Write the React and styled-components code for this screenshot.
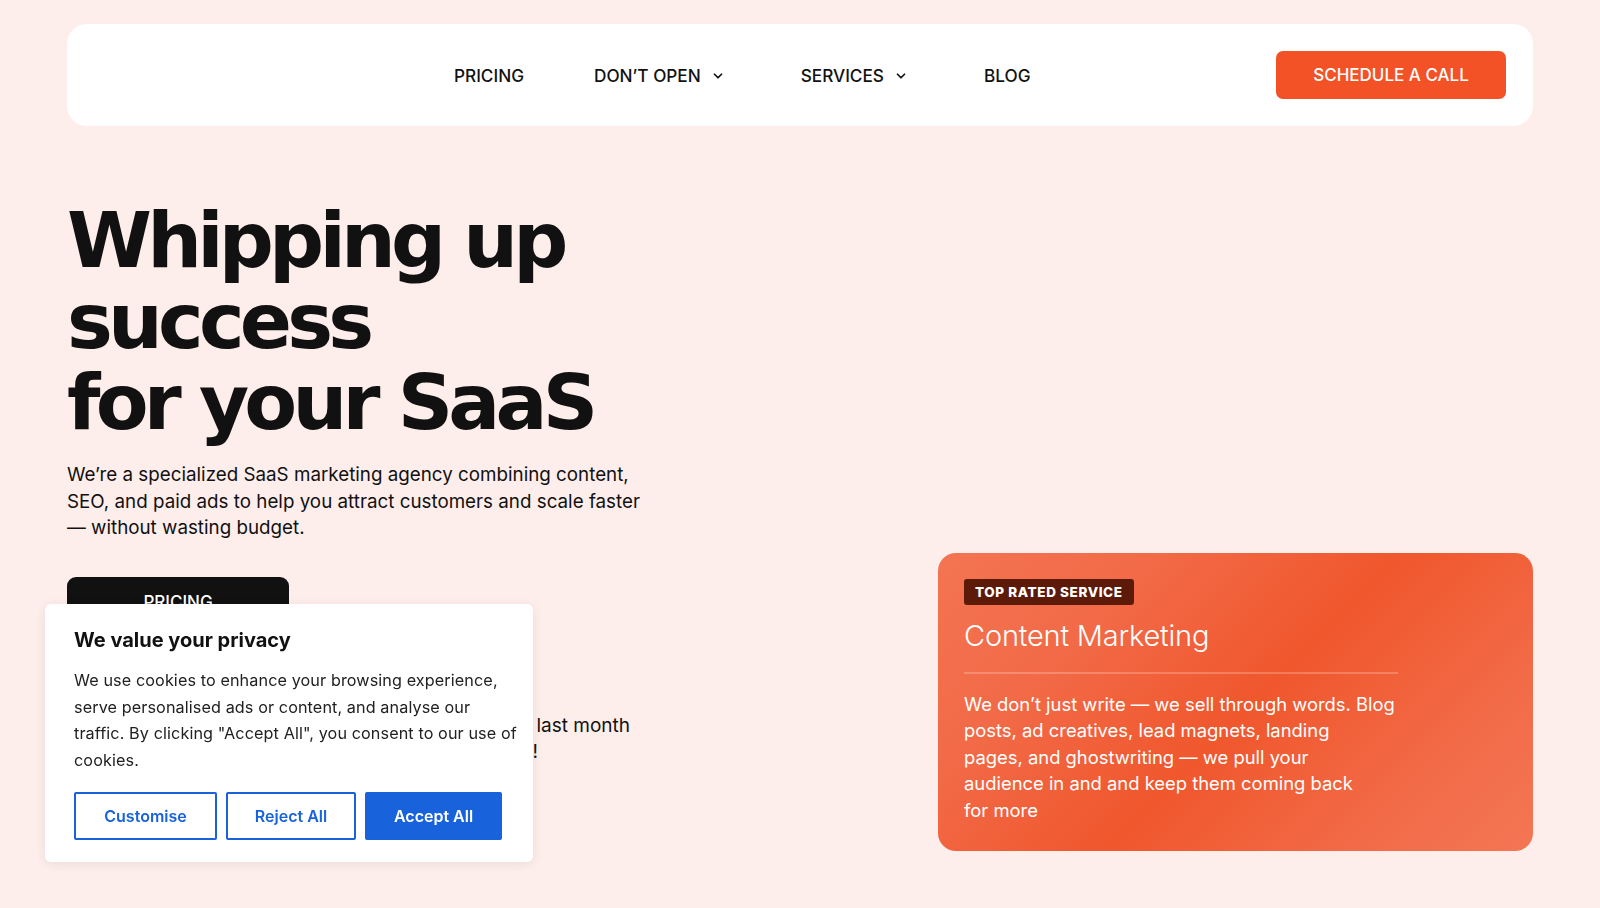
import React from "react";
import styled, { createGlobalStyle } from "styled-components";
import { ChevronDown } from "lucide-react";

const GlobalStyle = createGlobalStyle`
  * { box-sizing: border-box; }
  body {
    margin: 0;
    background: #fdeeeb;
    font-family: "Inter", "Open Sans", sans-serif;
    color: #111;
  }
`;

const links = [
  { label: "PRICING" },
  { label: "DON’T OPEN", menu: true },
  { label: "SERVICES", menu: true },
  { label: "BLOG" },
];

function App() {
  return (
    <>
      <GlobalStyle />
      <Page>
        <Nav>
          <LogoSlot />
          <NavLinks>
            {links.map((link) => (
              <NavLink key={link.label} $menu={link.menu}>
                {link.label}
                {link.menu && <ChevronDown size={14} strokeWidth={3} />}
              </NavLink>
            ))}
          </NavLinks>
          <CallButton>SCHEDULE A CALL</CallButton>
        </Nav>

        <Hero>
          <HeroLeft>
            <Title>
              Whipping up
              <br />
              success
              <br />
              for your SaaS
            </Title>
            <Lead>
              We’re a specialized SaaS marketing agency combining content,
              <br />
              SEO, and paid ads to help you attract customers and scale faster
              <br />— without wasting budget.
            </Lead>
            <DarkButton>PRICING</DarkButton>
            <Stats>
              <StatLine $width={563}>We brought in 1,200+ qualified leads for our clients last month</StatLine>
              <StatLine $width={471}>and we’re only getting started!</StatLine>
            </Stats>
          </HeroLeft>

          <ServiceCard>
            <Badge>TOP RATED SERVICE</Badge>
            <CardTitle>Content Marketing</CardTitle>
            <Divider />
            <CardText>
              We don’t just write — we sell through words. Blog
              <br />
              posts, ad creatives, lead magnets, landing
              <br />
              pages, and ghostwriting — we pull your
              <br />
              audience in and and keep them coming back
              <br />
              for more
            </CardText>
          </ServiceCard>
        </Hero>
      </Page>

      <CookieBanner>
        <CookieTitle>We value your privacy</CookieTitle>
        <CookieText>
          We use cookies to enhance your browsing experience,
          <br />
          serve personalised ads or content, and analyse our
          <br />
          traffic. By clicking "Accept All", you consent to our use of
          <br />
          cookies.
        </CookieText>
        <CookieActions>
          <CookieButton $w={143}>Customise</CookieButton>
          <CookieButton $w={130}>Reject All</CookieButton>
          <CookieButton $w={137} $primary>
            Accept All
          </CookieButton>
        </CookieActions>
      </CookieBanner>
    </>
  );
}

export default App;

const Page = styled.div`
  width: 1466px;
  margin: 0 auto;
  padding-top: 24px;
`;

const Nav = styled.nav`
  height: 102px;
  background: #fff;
  border-radius: 20px;
  display: flex;
  align-items: center;
  padding: 0 27px 0 0;
`;

const LogoSlot = styled.div`
  width: 387px;
  height: 40px;
`;

const NavLinks = styled.ul`
  display: flex;
  align-items: center;
  gap: 70px;
  list-style: none;
  margin: 0;
  padding: 0;
`;

const NavLink = styled.li`
  display: flex;
  align-items: center;
  gap: 10px;
  font-size: 17.2px;
  font-weight: 500;
  color: #111;
  padding-right: ${(p) => (p.$menu ? "6px" : "0")};
  svg {
    margin-top: 2px;
  }
`;

const CallButton = styled.button`
  margin-left: auto;
  width: 230px;
  height: 48px;
  border: none;
  border-radius: 7px;
  background: #f25226;
  color: #fff;
  font-family: inherit;
  font-size: 17px;
  font-weight: 500;
`;

const Hero = styled.section`
  display: grid;
  grid-template-columns: 1fr 595px;
  align-items: end;
  margin-top: 74px;
`;

const HeroLeft = styled.div`
  display: flex;
  flex-direction: column;
  align-items: flex-start;
`;

const Title = styled.h1`
  margin: 0;
  font-family: "DejaVu Sans", sans-serif;
  font-weight: 700;
  font-size: 77px;
  line-height: 81px;
  letter-spacing: -4.8px;
  color: #111;
`;

const Lead = styled.p`
  margin: 19px 0 0;
  font-size: 18.8px;
  line-height: 26.5px;
  color: #111;
`;

const DarkButton = styled.button`
  margin-top: 35px;
  width: 222px;
  height: 50px;
  border: none;
  border-radius: 9px;
  background: #111;
  color: #fff;
  font-family: inherit;
  font-size: 17px;
  font-weight: 500;
`;

const Stats = styled.div`
  margin-top: 86px;
  margin-bottom: 100px;
`;

const StatLine = styled.div`
  width: ${(p) => p.$width}px;
  text-align: right;
  white-space: nowrap;
  font-size: 19px;
  line-height: 26.5px;
  color: #111;
`;

const ServiceCard = styled.article`
  margin-bottom: 15px;
  height: 298px;
  border-radius: 18px;
  padding: 26px 26px 28px;
  color: #fff;
  background: linear-gradient(
    135deg,
    #f47452 0%,
    #f26a47 25%,
    #f0572d 52%,
    #f26b48 80%,
    #f47654 100%
  );
`;

const Badge = styled.span`
  display: inline-block;
  height: 26px;
  line-height: 26px;
  padding: 0 11px;
  border-radius: 3px;
  background: #5c1a08;
  font-size: 13.5px;
  font-weight: 800;
  letter-spacing: 0.6px;
`;

const CardTitle = styled.h2`
  margin: 14px 0 0;
  font-size: 29px;
  line-height: 34px;
  font-weight: 300;
  letter-spacing: -0.2px;
`;

const Divider = styled.hr`
  width: 434px;
  margin: 19px 0 0;
  border: none;
  border-top: 2px solid rgba(255, 255, 255, 0.22);
`;

const CardText = styled.p`
  margin: 17px 0 0;
  font-size: 18.4px;
  line-height: 26.5px;
  white-space: nowrap;
`;

const CookieBanner = styled.div`
  position: fixed;
  left: 45px;
  bottom: 46px;
  width: 488px;
  background: #fff;
  border-radius: 6px;
  box-shadow: 0 2px 12px rgba(0, 0, 0, 0.08);
  padding: 24px 29px 22px;
`;

const CookieTitle = styled.h3`
  margin: 0;
  font-size: 20px;
  line-height: 24px;
  font-weight: 700;
  color: #111;
`;

const CookieText = styled.p`
  margin: 15px 0 0;
  font-size: 16.2px;
  line-height: 26.5px;
  letter-spacing: 0.1px;
  color: #212121;
  white-space: nowrap;
`;

const CookieActions = styled.div`
  display: flex;
  gap: 9px;
  margin-top: 19px;
`;

const CookieButton = styled.button`
  width: ${(p) => p.$w}px;
  height: 48px;
  border: 2px solid #1863dc;
  border-radius: 2px;
  background: ${(p) => (p.$primary ? "#1863dc" : "#fff")};
  color: ${(p) => (p.$primary ? "#fff" : "#1863dc")};
  font-family: inherit;
  font-size: 16px;
  font-weight: 600;
`;
